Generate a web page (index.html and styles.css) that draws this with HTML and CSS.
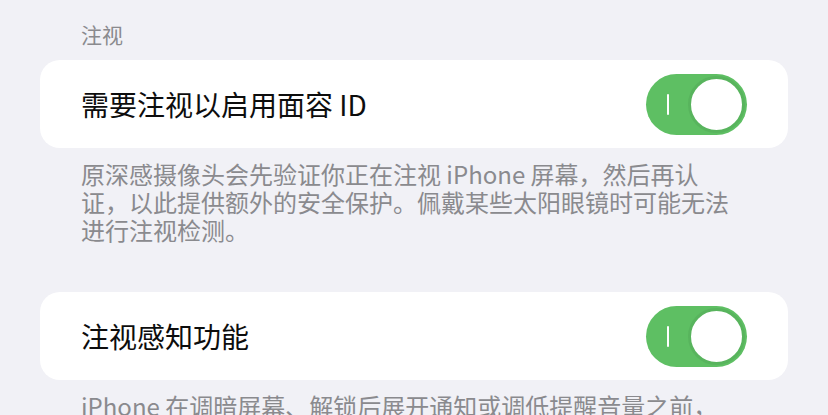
FILE: index.html
```html
<!DOCTYPE html>
<html lang="zh-CN">
<head>
    <meta charset="UTF-8">
    <meta name="viewport" content="width=device-width, initial-scale=1.0">
    <title>注视</title>
    <link rel="stylesheet" href="styles.css">
</head>
<body>
    <div class="settings">
        <div class="group-header">注视</div>

        <div class="group-card">
            <div class="row-title">需要注视以启用面容 ID</div>
            <div class="toggle on">
                <span class="toggle-mark"></span>
                <span class="toggle-knob"></span>
            </div>
        </div>
        <div class="group-footer">
            原深感摄像头会先验证你正在注视 iPhone 屏幕，然后再认<br>证，以此提供额外的安全保护。佩戴某些太阳眼镜时可能无法<br>进行注视检测。
        </div>

        <div class="group-card second">
            <div class="row-title">注视感知功能</div>
            <div class="toggle on">
                <span class="toggle-mark"></span>
                <span class="toggle-knob"></span>
            </div>
        </div>
        <div class="group-footer">
            iPhone 在调暗屏幕、解锁后展开通知或调低提醒音量之前，<br>会先检查你是否正在注视屏幕。
        </div>
    </div>
</body>
</html>
```

FILE: styles.css
```css
/* Общие настройки страницы */
html, body {
    margin: 0;
    overflow: hidden;
}

body {
    background-color: #f1f1f6;
    font-family: "Noto Sans CJK SC", "Noto Sans", sans-serif;
}

.settings {
    padding: 20px 40px 0;
}

/* Заголовок группы */
.group-header {
    padding-left: 41px;
    font-size: 21px;
    line-height: 28px;
    color: #8a8a8e;
    margin-bottom: 12px;
}

/* Карточка с переключателем */
.group-card {
    display: flex;
    align-items: center;
    justify-content: space-between;
    height: 88px;
    padding: 0 41px;
    background-color: #fff;
    border-radius: 20px;
}

.group-card.second {
    margin-top: 48px;
}

.row-title {
    font-size: 28px;
    color: #0d0d0d;
}

/* Переключатель */
.toggle {
    display: flex;
    align-items: center;
    box-sizing: border-box;
    width: 101px;
    height: 61px;
    padding: 2px;
    border-radius: 31px;
    background-color: #e5e5ea;
}

.toggle.on {
    background-color: #5ebf63;
}

.toggle-mark {
    width: 2px;
    height: 21px;
    margin-left: 19px;
    background-color: #fff;
    border-radius: 1px;
}

.toggle-knob {
    box-sizing: border-box;
    width: 57px;
    height: 57px;
    margin-left: auto;
    border: 3px solid #58b45d;
    border-radius: 50%;
    background-color: #fff;
}

/* Пояснение под карточкой */
.group-footer {
    padding: 12px 41px 0;
    font-size: 24px;
    line-height: 28px;
    color: #8a8a8e;
}
```
